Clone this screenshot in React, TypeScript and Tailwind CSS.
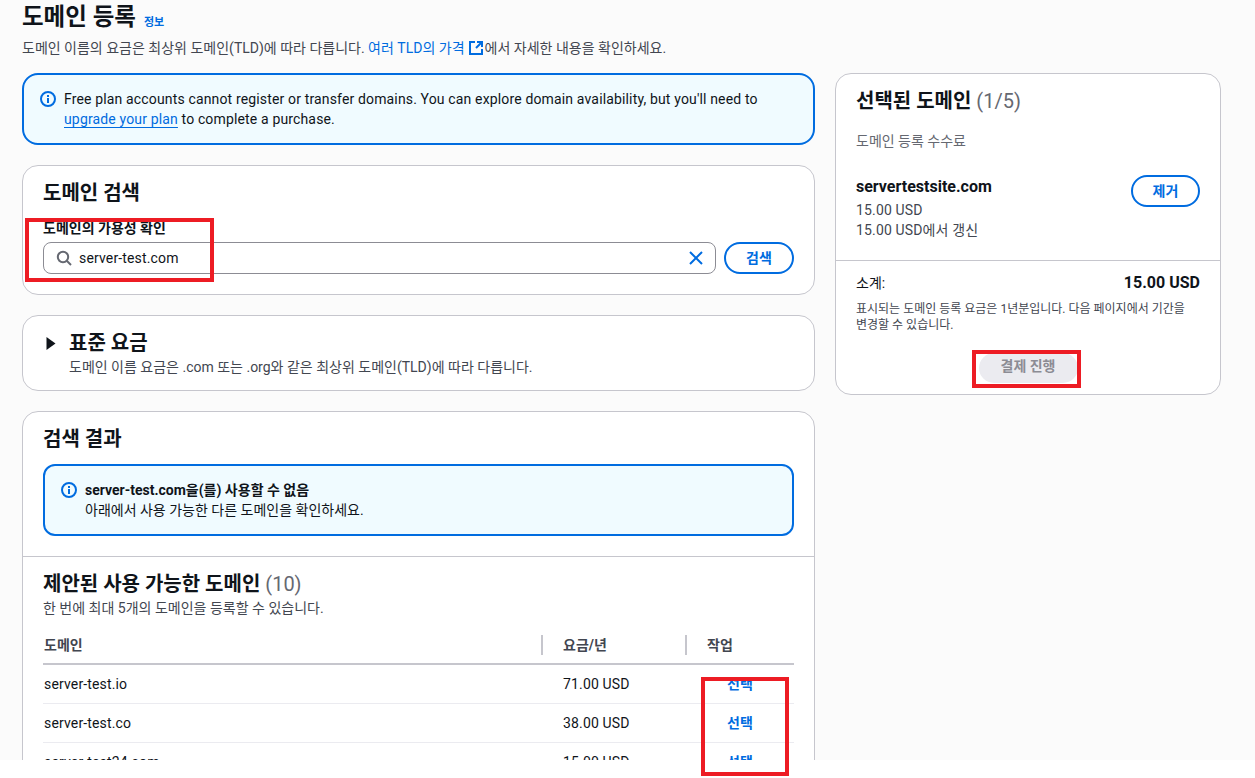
import React from 'react';

const rows = [
  { name: 'server-test.io', price: '71.00 USD' },
  { name: 'server-test.co', price: '38.00 USD' },
  { name: 'server-test24.com', price: '15.00 USD' },
];

const InfoIcon = () => (
  <svg width="16" height="16" viewBox="0 0 16 16" fill="none" className="shrink-0">
    <circle cx="8" cy="8" r="7" stroke="#006ce0" strokeWidth="2" />
    <path d="M8 7v5" stroke="#006ce0" strokeWidth="2" />
    <path d="M8 4v2" stroke="#006ce0" strokeWidth="2" />
  </svg>
);

export default function App() {
  return (
    <div className="relative h-[778px] overflow-hidden bg-white font-['Roboto','Noto_Sans_CJK_KR',sans-serif] text-[#0f141a]">
      <div className="h-[760px] overflow-hidden bg-[#fbfbfb] pl-[22px] pr-[34px]">
        <h1 className="mb-[2px] flex h-[36px] items-center gap-2 text-[23.5px] leading-none font-bold">
          도메인 등록 <span className="mt-[9px] text-[11px] font-bold text-[#006ce0]">정보</span>
        </h1>
        <p className="flex h-[20px] items-center text-sm text-[#424650]">
          도메인 이름의 요금은 최상위 도메인(TLD)에 따라 다릅니다.&nbsp;
          <span className="text-[#006ce0]">여러 TLD의 가격</span>
          <svg width="16" height="16" viewBox="0 0 16 16" fill="none" stroke="#006ce0" strokeWidth="2" className="ml-[3px] mr-px">
            <path d="M7 2H2v12h12V9" />
            <path d="M8 8l6-6M9 2h5v5" />
          </svg>
          에서 자세한 내용을 확인하세요.
        </p>

        <div className="mt-[15px] flex gap-5">
          <div className="flex w-[793px] shrink-0 flex-col">
            <div className="flex h-[72px] gap-2 rounded-2xl border-2 border-[#006ce0] bg-[#f0fbff] py-[14px] pl-4 pr-4 text-sm leading-5 tracking-[0.15px]">
              <div className="pt-[2px]">
                <InfoIcon />
              </div>
              <p>
                Free plan accounts cannot register or transfer domains. You can explore domain availability, but you'll need to{' '}
                <span className="text-[#006ce0] underline underline-offset-3">upgrade your plan</span> to complete a purchase.
              </p>
            </div>

            <section className="mt-5 h-[130px] rounded-2xl border border-[#c6c6cd] bg-white px-5 pt-[13px]">
              <h2 className="text-xl leading-[28px] font-bold">도메인 검색</h2>
              <label className="mt-[11px] block text-sm leading-[20px] font-bold">도메인의 가용성 확인</label>
              <div className="mt-1 flex gap-2">
                <div className="flex h-8 flex-1 items-center rounded-lg border border-[#8c8c94] bg-white pl-[12px] pr-[11px] text-sm">
                  <svg width="16" height="16" viewBox="0 0 16 16" fill="none" stroke="#656871" strokeWidth="2">
                    <circle cx="7" cy="7" r="5.2" />
                    <path d="M11 11l4 4" />
                  </svg>
                  <span className="ml-[7px] flex-1 tracking-[0.15px]">server-test.com</span>
                  <svg width="16" height="16" viewBox="0 0 16 16" fill="none" stroke="#006ce0" strokeWidth="2">
                    <path d="M2 2l12 12M14 2L2 14" />
                  </svg>
                </div>
                <button className="h-8 w-[70px] rounded-full border-2 border-[#006ce0] text-sm font-bold text-[#006ce0]">검색</button>
              </div>
            </section>

            <section className="mt-5 flex h-[76px] gap-[13px] rounded-2xl border border-[#c6c6cd] bg-white pl-[23px] pt-[15px]">
              <svg width="10" height="13" viewBox="0 0 10 13" className="mt-[6px] shrink-0" fill="#0f141a">
                <path d="M0.5 0L9.5 6.5L0.5 13Z" />
              </svg>
              <div>
                <h2 className="text-xl leading-[24px] font-bold">표준 요금</h2>
                <p className="mt-[2px] text-sm leading-5 text-[#424650]">도메인 이름 요금은 .com 또는 .org와 같은 최상위 도메인(TLD)에 따라 다릅니다.</p>
              </div>
            </section>

            <section className="mt-5 h-[400px] rounded-t-2xl border border-[#c6c6cd] bg-white">
              <div className="border-b border-[#c6c6cd] px-5 pb-5 pt-[13px]">
                <h2 className="text-xl leading-[28px] font-bold">검색 결과</h2>
                <div className="mt-[11px] flex h-[72px] gap-2 rounded-xl border-2 border-[#006ce0] bg-[#f0fbff] py-[14px] pl-4 pr-4 text-sm leading-5">
                  <div className="pt-[2px]">
                    <InfoIcon />
                  </div>
                  <div>
                    <p className="font-bold">server-test.com을(를) 사용할 수 없음</p>
                    <p>아래에서 사용 가능한 다른 도메인을 확인하세요.</p>
                  </div>
                </div>
              </div>
              <div className="px-5 pt-[13px]">
                <h2 className="text-xl leading-[28px] font-bold">
                  제안된 사용 가능한 도메인 <span className="font-normal text-[#656871]">(10)</span>
                </h2>
                <p className="text-sm leading-5 text-[#424650]">한 번에 최대 5개의 도메인을 등록할 수 있습니다.</p>
                <div className="mt-[9px] grid h-[38px] grid-cols-[498px_144px_1fr] items-center border-b-2 border-[#c6c6cd] pb-px text-sm font-bold text-[#424650]">
                  <div className="pl-[1px]">도메인</div>
                  <div className="border-l-2 border-[#c6c6cd] pl-5">요금/년</div>
                  <div className="border-l-2 border-[#c6c6cd] pl-5">작업</div>
                </div>
                {rows.map((row) => (
                  <div key={row.name} className="grid h-[39px] grid-cols-[498px_144px_1fr] items-center border-b border-[#ebebf0] text-sm tracking-[0.15px]">
                    <div className="pl-[1px]">{row.name}</div>
                    <div className="pl-[22px]">{row.price}</div>
                    <div className="pl-[42px] font-bold tracking-normal text-[#006ce0]">선택</div>
                  </div>
                ))}
              </div>
            </section>
          </div>

          <aside className="h-[322px] w-[386px] shrink-0 rounded-2xl border border-[#c6c6cd] bg-white">
            <div className="h-[187px] border-b border-[#c6c6cd] px-5 pt-[13px]">
              <h2 className="text-xl leading-[28px] font-bold">
                선택된 도메인 <span className="font-normal text-[#656871]">(1/5)</span>
              </h2>
              <p className="mt-[16px] text-sm leading-5 text-[#656871]">도메인 등록 수수료</p>
              <div className="mt-[25px] flex items-start justify-between">
                <div className="text-sm leading-5 text-[#424650]">
                  <p className="text-base leading-[22px] font-bold text-[#0f141a]">servertestsite.com</p>
                  <p className="mt-[2px] tracking-[0.15px]">15.00 USD</p>
                  <p className="tracking-[0.15px]">15.00 USD에서 갱신</p>
                </div>
                <button className="-mt-px h-8 w-[69px] rounded-full border-2 border-[#006ce0] text-sm font-bold text-[#006ce0]">제거</button>
              </div>
            </div>
            <div className="px-5 pt-[12px]">
              <div className="flex items-center justify-between text-sm leading-5">
                <span>소계:</span>
                <span className="text-base leading-5 font-bold">15.00 USD</span>
              </div>
              <p className="mt-[8px] text-xs leading-[16px] break-keep text-[#424650]">표시되는 도메인 등록 요금은 1년분입니다. 다음 페이지에서 기간을 변경할 수 있습니다.</p>
              <div className="mt-[20px] flex justify-center">
                <button className="h-[30px] w-[99px] rounded-full bg-[#ebebf0] pb-[4px] text-sm font-bold text-[#8c8c94]">결제 진행</button>
              </div>
            </div>
          </aside>
        </div>
      </div>

      {/* annotation boxes drawn over the screenshot */}
      <div className="absolute left-[25px] top-[218px] h-[64px] w-[189px] border-4 border-[#ed1c24]" />
      <div className="absolute left-[972px] top-[350px] h-[38px] w-[109px] border-4 border-[#ed1c24]" />
      <div className="absolute left-[701px] top-[677px] h-[99px] w-[88px] border-4 border-[#ed1c24]" />
    </div>
  );
}
